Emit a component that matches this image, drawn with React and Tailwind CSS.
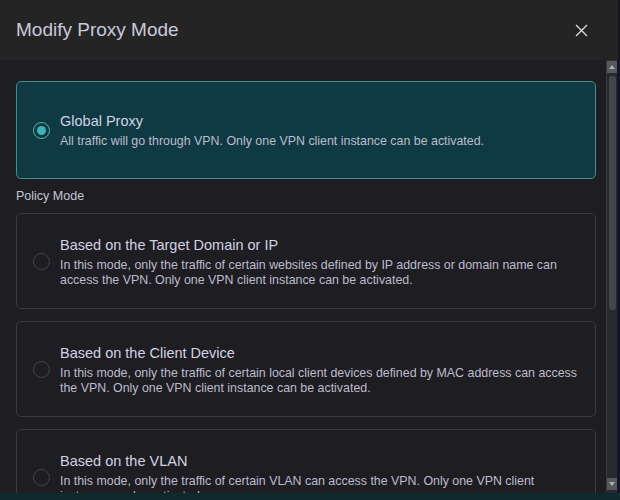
import React from "react";

const Radio = ({ checked }) => (
  <div className={checked ? "w-[17px] h-[17px] shrink-0 rounded-full flex items-center justify-center border border-[#5fb3b3]" : "w-[17px] h-[17px] shrink-0 rounded-full flex items-center justify-center border border-[#45454d]"}>
    {checked && <div className="w-[9px] h-[9px] rounded-full bg-[#3cb4b4]" />}
  </div>
);

const Card = ({ checked, title, desc }) => (
  <div
    className={
      checked
        ? "shrink-0 h-[98px] rounded-[5px] border border-[#3f8e92] bg-[#0f3a43] flex items-center pl-[16px] pr-2"
        : "shrink-0 h-[96px] rounded-[5px] border border-[#3a3a42] bg-[#1e1d22] flex items-center pl-[16px] pr-2"
    }
  >
    <Radio checked={checked} />
    <div className="ml-[10px] flex flex-col">
      <div className="text-[14.5px] leading-[20px] text-[#d2d2e4]">{title}</div>
      <div className="mt-[3px] text-[12.4px] leading-[15px] text-[#bcbccc] whitespace-nowrap">{desc}</div>
    </div>
  </div>
);

export default function App() {
  return (
    <div className="w-[620px] h-[500px] overflow-hidden relative bg-[#1e1d22] font-[family-name:'Liberation_Sans',Arial,sans-serif]">
      <div className="h-[60px] bg-[#242424] flex items-center justify-between pl-[16px] pr-[30px] border-r-2 border-[#151520]">
        <div className="text-[19px] text-[#c9c9dc]">Modify Proxy Mode</div>
        <svg width="13" height="13" viewBox="0 0 13 13" className="mt-[1px]">
          <path d="M1 1L12 12M12 1L1 12" stroke="#d8d8d8" strokeWidth="1.4" />
        </svg>
      </div>
      <div className="flex h-[440px]">
        <div className="flex-1 pl-[16px] pr-[10px] pt-[21px] flex flex-col">
          <Card
            checked
            title="Global Proxy"
            desc="All traffic will go through VPN. Only one VPN client instance can be activated."
          />
          <div className="shrink-0 text-[12.5px] text-[#c6c6d6] mt-[10px] mb-[9px] leading-[15px]">Policy Mode</div>
          <div className="flex flex-col gap-[12px] shrink-0">
            <Card
              title="Based on the Target Domain or IP"
              desc={<>In this mode, only the traffic of certain websites defined by IP address or domain name can<br />access the VPN. Only one VPN client instance can be activated.</>}
            />
            <Card
              title="Based on the Client Device"
              desc={<>In this mode, only the traffic of certain local client devices defined by MAC address can access<br />the VPN. Only one VPN client instance can be activated.</>}
            />
            <Card
              title="Based on the VLAN"
              desc={<>In this mode, only the traffic of certain VLAN can access the VPN. Only one VPN client<br />instance can be activated.</>}
            />
          </div>
        </div>
        <div className="w-[14px] flex">
          <div className="w-[11px] bg-[#2a2a2e] flex flex-col items-center pt-[1px] border-l border-[#3a3a3e]">
            <div className="h-[12px] w-[10px] bg-[#58585c] flex items-center justify-center">
              <div className="w-0 h-0 border-l-[3px] border-r-[3px] border-b-[4px] border-l-transparent border-r-transparent border-b-[#b0b0b0]" />
            </div>
            <div className="mt-[3px] w-[7px] h-[234px] rounded-[3px] bg-[#46464a]" />
            <div className="flex-1" />
            <div className="h-[12px] w-[10px] bg-[#58585c] mb-[10px] flex items-center justify-center">
              <div className="w-0 h-0 border-l-[3px] border-r-[3px] border-t-[4px] border-l-transparent border-r-transparent border-t-[#b0b0b0]" />
            </div>
          </div>
          <div className="flex-1 bg-[#14142a]" />
        </div>
      </div>
      <div className="absolute left-0 right-0 bottom-0 h-[7px] bg-[#0e2a2f]" />
    </div>
  );
}
